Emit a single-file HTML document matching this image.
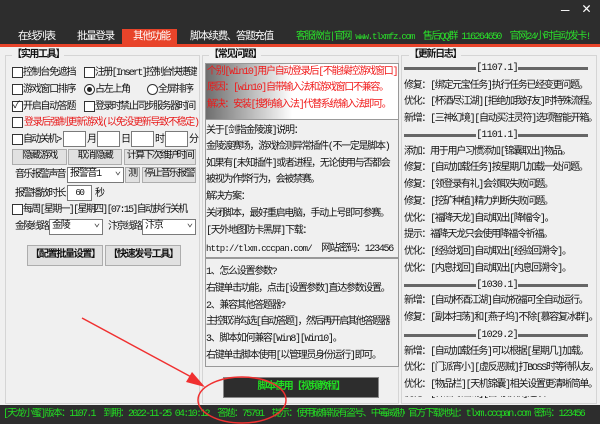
<!DOCTYPE html>
<html><head><meta charset="utf-8"><style>
*{margin:0;padding:0;box-sizing:border-box}
body{width:600px;height:424px;overflow:hidden;background:#f0f0f0;position:relative;font-family:"Liberation Mono","Noto Sans CJK SC",monospace;font-size:10px;letter-spacing:-1.3px;color:#111}
.a{position:absolute;white-space:nowrap;line-height:13px}
.cb{position:absolute;width:11px;height:11px;border:1px solid #333;background:#fff}
.rd{position:absolute;width:11px;height:11px;border:1px solid #333;border-radius:50%;background:#fff}
.btn{position:absolute;background:#e1e1e1;border:1px solid #adadad;text-align:center;line-height:14px;white-space:nowrap;overflow:hidden}
.inp{position:absolute;background:#fff;border:1px solid #7a7a7a}
.sel{position:absolute;background:#fff;border:1px solid #7a7a7a;line-height:14px;padding-left:2px;white-space:nowrap}
.sel:after{content:"⌄";position:absolute;right:3px;top:-3px;font-size:11px;color:#444}
.grp{position:absolute;border:1px solid #d5d5d5}
.sep{position:absolute;left:404px;width:184px;height:13px}
.sep:before{content:"";position:absolute;left:0;right:0;top:5px;height:3px;background:#666}
.sep span{position:absolute;left:72px;width:42px;text-align:center;background:#f0f0f0;line-height:13px;font-size:10px;letter-spacing:-0.8px}
.g{color:#22dd22}
.n{letter-spacing:-1.7px}
</style></head><body>
<div style="position:absolute;left:0;top:0;width:600px;height:44px;background:#2d2d2d"></div>
<div style="position:absolute;left:0;top:44px;width:600px;height:3px;background:#e8442a"></div>
<div class="a" style="left:561px;top:5px;color:#fff;font-size:14px">—</div>
<div class="a" style="left:582px;top:3px;color:#fff;font-size:15px">✕</div>
<div style="position:absolute;left:122px;top:29px;width:55px;height:16px;background:#e8442a"></div>
<div class="a" style="left:18px;top:31px;color:#fff;font-size:10.5px">在线列表</div>
<div class="a" style="left:77px;top:31px;color:#fff;font-size:10.5px">批量登录</div>
<div class="a" style="left:133px;top:31px;color:#fff;font-size:10.5px">其他功能</div>
<div class="a" style="left:190px;top:31px;color:#fff;font-size:10.5px">脚本续费、答题充值</div>
<div class="a" style="left:296px;top:31px;color:#2ae02a;font-size:10px;letter-spacing:-1.6px">客服微信|官网 <span style="font-size:9px;letter-spacing:-1.2px">www.tlxmfz.com</span>&nbsp;&nbsp;售后QQ群 116264650&nbsp;&nbsp;官网24小时自动发卡!</div>

<!-- left -->
<div class="grp" style="left:5px;top:55px;width:195px;height:349px"></div>
<div class="a" style="left:12px;top:49px;background:#f0f0f0;font-weight:bold">【实用工具】</div>
<div class="cb" style="left:12px;top:67px"></div><div class="a" style="left:23px;top:67px">控制台免遮挡</div>
<div class="cb" style="left:84px;top:67px"></div><div class="a n" style="left:95px;top:67px">注册[Insert]控制台快捷键</div>
<div class="cb" style="left:12px;top:84px"></div><div class="a" style="left:23px;top:84px">游戏窗口排序</div>
<div class="rd" style="left:84px;top:84px"></div><div style="position:absolute;left:87px;top:87px;width:5px;height:5px;border-radius:50%;background:#222"></div><div class="a" style="left:95px;top:84px">占左上角</div>
<div class="rd" style="left:147px;top:84px"></div><div class="a" style="left:158px;top:84px">全屏排序</div>
<div class="cb" style="left:12px;top:101px"></div><div class="a" style="left:13px;top:100px;font-size:10px">✓</div><div class="a" style="left:23px;top:101px">开启自动答题</div>
<div class="cb" style="left:84px;top:101px"></div><div class="a n" style="left:95px;top:101px">登录时禁止同步服务器时间</div>
<div class="cb" style="left:12px;top:117px"></div><div class="a" style="left:24px;top:117px;color:#e81818">登录后强制更新游戏(以免没更新导致不稳定)</div>
<div class="cb" style="left:12px;top:134px"></div><div class="a n" style="left:23px;top:134px">自动关机&gt;</div>
<div class="inp" style="left:63px;top:131px;width:23px;height:16px"></div><div class="a" style="left:87px;top:134px">月</div>
<div class="inp" style="left:97px;top:131px;width:23px;height:16px"></div><div class="a" style="left:121px;top:134px">日</div>
<div class="inp" style="left:131px;top:131px;width:23px;height:16px"></div><div class="a" style="left:155px;top:134px">时</div>
<div class="inp" style="left:165px;top:131px;width:23px;height:16px"></div><div class="a" style="left:189px;top:134px">分</div>
<div class="btn" style="left:12px;top:149px;width:55px;height:16px">隐藏游戏</div>
<div class="btn" style="left:68px;top:149px;width:54px;height:16px">取消隐藏</div>
<div class="btn n" style="left:124px;top:149px;width:72px;height:16px">计算下次维护时间</div>
<div class="a n" style="left:15px;top:169px">音乐报警声音</div>
<div class="sel" style="left:67px;top:167px;width:57px;height:16px">报警音1</div>
<div class="btn" style="left:125px;top:167px;width:15px;height:16px">测</div>
<div class="btn n" style="left:142px;top:167px;width:54px;height:16px">停止音乐报警</div>
<div class="a n" style="left:15px;top:188px">报警播放时长</div>
<div class="inp" style="left:67px;top:185px;width:25px;height:16px;text-align:center;line-height:14px;font-size:9px">60</div>
<div class="a" style="left:95px;top:188px">秒</div>
<div class="cb" style="left:12px;top:204px"></div><div class="a n" style="left:23px;top:204px">每周[星期一][星期四][07:15]自动执行关机</div>
<div class="a n" style="left:15px;top:221px">金陵线路</div>
<div class="sel" style="left:49px;top:219px;width:54px;height:16px">金陵</div>
<div class="a n" style="left:108px;top:221px">汴京线路</div>
<div class="sel" style="left:142px;top:219px;width:54px;height:16px">汴京</div>
<div class="btn" style="left:27px;top:245px;width:76px;height:21px;line-height:19px;font-weight:bold">【配置批量设置】</div>
<div class="btn" style="left:105px;top:245px;width:76px;height:21px;line-height:19px;font-weight:bold">【快速发号工具】</div>

<!-- middle -->
<div class="grp" style="left:202px;top:55px;width:197px;height:349px"></div>
<div class="a" style="left:209px;top:49px;background:#f0f0f0;font-weight:bold">【常见问题】</div>
<div style="position:absolute;left:205px;top:63px;width:194px;height:57px;border:1px solid #999;background:linear-gradient(90deg,#6e6e6e 0%,#cfcfcf 30%,#fff 45%,#fff 100%)"></div>
<div class="a" style="left:207px;top:66px;color:#f01818">个别[Win10]用户自动登录后[不能操控游戏窗口]</div>
<div class="a" style="left:207px;top:82px;color:#f01818">原因：[win10]自带输入法和游戏窗口不兼容。</div>
<div class="a" style="left:207px;top:99px;color:#f01818">解决：安装[搜狗输入法]代替系统输入法即可。</div>
<div style="position:absolute;left:205px;top:120px;width:194px;height:138px;border:1px solid #999;border-top:0"></div>
<div style="position:absolute;left:205px;top:258px;width:194px;height:109px;border:1px solid #999"></div>
<div class="a" style="left:206px;top:125px">关于[剑指金陵渡]说明：</div>
<div class="a" style="left:206px;top:141px">金陵渡赛场，游戏检测异常插件(不一定是脚本)</div>
<div class="a" style="left:206px;top:158px">如果有[未知插件]或者进程，无论使用与否都会</div>
<div class="a" style="left:206px;top:174px">被视为作弊行为，会被禁赛。</div>
<div class="a" style="left:206px;top:191px">解决方案：</div>
<div class="a" style="left:206px;top:208px">关闭脚本，最好重启电脑，手动上号即可参赛。</div>
<div class="a" style="left:206px;top:225px">[天外地图防卡黑屏]下载：</div>
<div class="a" style="left:206px;top:243px"><span style="font-size:9px;letter-spacing:-0.8px">http://tlxm.cccpan.com/</span>&nbsp; 网站密码：123456</div>
<div class="a" style="left:206px;top:266px">1、怎么设置参数?</div>
<div class="a" style="left:206px;top:283px">右键单击功能，点击[设置参数]直达参数设置。</div>
<div class="a" style="left:206px;top:300px">2、兼容其他答题器?</div>
<div class="a n" style="left:206px;top:316px">主控取消勾选[自动答题]，然后再开启其他答题器</div>
<div class="a" style="left:206px;top:333px">3、脚本如何兼容[Win8][Win10]。</div>
<div class="a" style="left:206px;top:350px">右键单击脚本使用[以管理员身份运行]即可。</div>
<div style="position:absolute;left:223px;top:377px;width:156px;height:21px;background:#2d2d2d;border:1px solid #888;color:#22dd22;text-align:center;line-height:19px;font-weight:bold">脚本使用【视频教程】</div>

<!-- right -->
<div class="grp" style="left:401px;top:55px;width:196px;height:349px"></div>
<div class="a" style="left:409px;top:49px;background:#f0f0f0;font-weight:bold">【更新日志】</div>
<div class="sep" style="top:62px"><span>[1107.1]</span></div>
<div class="a" style="left:404px;top:80px">修复：[绑定元宝任务]执行任务已经变更问题。</div>
<div class="a" style="left:404px;top:96px">优化：[杯酒尽江湖][拒绝加我好友]时特殊流程。</div>
<div class="a" style="left:404px;top:113px">新增：[三神幻境][自动买注灵符]选项智能开箱。</div>
<div class="sep" style="top:129px"><span>[1101.1]</span></div>
<div class="a" style="left:404px;top:146px">添加：用于用户习惯添加[锦囊取出]物品。</div>
<div class="a" style="left:404px;top:162px">修复：[自动加载任务]按星期几加载一处问题。</div>
<div class="a" style="left:404px;top:179px">修复：[领登录有礼]会领取失败问题。</div>
<div class="a" style="left:404px;top:196px">修复：[挖矿种植]精力判断失败问题。</div>
<div class="a" style="left:404px;top:213px">优化：[福降天龙]自动取出[降幅令]。</div>
<div class="a" style="left:404px;top:229px">提示：福降天龙只会使用降福令祈福。</div>
<div class="a" style="left:404px;top:246px">优化：[经验找回]自动取出[经验回溯令]。</div>
<div class="a" style="left:404px;top:263px">优化：[内息找回]自动取出[内息回溯令]。</div>
<div class="sep" style="top:279px"><span>[1030.1]</span></div>
<div class="a" style="left:404px;top:295px">新增：[自动杯酒江湖]自动祝福可全自动运行。</div>
<div class="a" style="left:404px;top:312px">修复：[副本扫荡]和[燕子坞]不除[慕容复冰群]。</div>
<div class="sep" style="top:329px"><span>[1029.2]</span></div>
<div class="a" style="left:404px;top:346px">新增：[自动加载任务]可以根据[星期几]加载。</div>
<div class="a" style="left:404px;top:362px">优化：[门派宵小][虚反恶贼]打BOSS时等待队友。</div>
<div class="a" style="left:404px;top:379px">优化：[物品栏][天机锦囊]相关设置更清晰简单。</div>
<div style="position:absolute;left:404px;top:396px;width:190px;height:3px;overflow:hidden"><div class="a" style="left:0;top:-8px">优化：[杯酒尽江湖][自动领取]选项</div></div>

<!-- status -->
<div style="position:absolute;left:0;top:405px;width:600px;height:19px;background:#2d2d2d"></div>
<div class="a g" style="left:3px;top:408px;font-size:10px;letter-spacing:-1.75px;width:596px;overflow:hidden">[天龙小蜜]版本：1107.1&nbsp;&nbsp;到期：2022-11-25 04:10:12&nbsp;&nbsp;答题：75791&nbsp;&nbsp;提示：使用破解版有盗号、中毒威胁 官方下载地址：tlxm.cccpan.com 密码：123456</div>

<!-- annotation -->
<svg style="position:absolute;left:0;top:0" width="600" height="424">
<line x1="82" y1="318" x2="195" y2="379" stroke="#f03030" stroke-width="1.5"/>
<polygon points="205,387 186,382 192,372" fill="#f03030"/>
<ellipse cx="242" cy="400" rx="44" ry="23" fill="none" stroke="#f03030" stroke-width="1.5"/>
</svg>
</body></html>
